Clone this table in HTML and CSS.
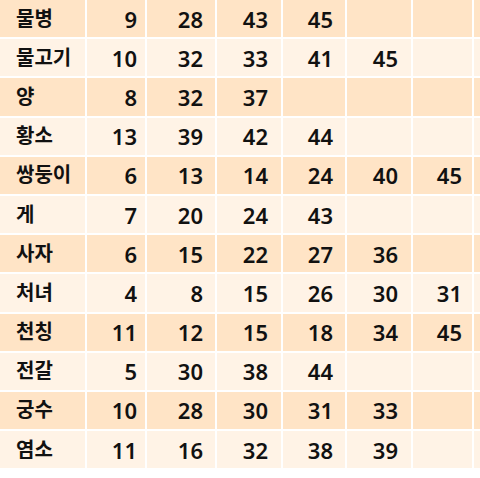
FILE: index.html
```html
<!DOCTYPE html>
<html lang="ko">
<head>
<meta charset="utf-8">
<title>별자리 번호</title>
<link rel="stylesheet" href="styles.css">
</head>
<body>
<table class="zodiac">
  <colgroup>
    <col class="c-name"><col class="c1"><col class="c2"><col class="c3"><col class="c4"><col class="c5"><col class="c6"><col class="c7">
  </colgroup>
  <tbody>
    <tr><td class="name">물병</td><td class="num">9</td><td class="num">28</td><td class="num">43</td><td class="num">45</td><td class="num"></td><td class="num"></td><td class="num"></td></tr>
    <tr><td class="name">물고기</td><td class="num">10</td><td class="num">32</td><td class="num">33</td><td class="num">41</td><td class="num">45</td><td class="num"></td><td class="num"></td></tr>
    <tr><td class="name">양</td><td class="num">8</td><td class="num">32</td><td class="num">37</td><td class="num"></td><td class="num"></td><td class="num"></td><td class="num"></td></tr>
    <tr><td class="name">황소</td><td class="num">13</td><td class="num">39</td><td class="num">42</td><td class="num">44</td><td class="num"></td><td class="num"></td><td class="num"></td></tr>
    <tr><td class="name">쌍둥이</td><td class="num">6</td><td class="num">13</td><td class="num">14</td><td class="num">24</td><td class="num">40</td><td class="num">45</td><td class="num"></td></tr>
    <tr><td class="name">게</td><td class="num">7</td><td class="num">20</td><td class="num">24</td><td class="num">43</td><td class="num"></td><td class="num"></td><td class="num"></td></tr>
    <tr><td class="name">사자</td><td class="num">6</td><td class="num">15</td><td class="num">22</td><td class="num">27</td><td class="num">36</td><td class="num"></td><td class="num"></td></tr>
    <tr><td class="name">처녀</td><td class="num">4</td><td class="num">8</td><td class="num">15</td><td class="num">26</td><td class="num">30</td><td class="num">31</td><td class="num"></td></tr>
    <tr><td class="name">천칭</td><td class="num">11</td><td class="num">12</td><td class="num">15</td><td class="num">18</td><td class="num">34</td><td class="num">45</td><td class="num"></td></tr>
    <tr><td class="name">전갈</td><td class="num">5</td><td class="num">30</td><td class="num">38</td><td class="num">44</td><td class="num"></td><td class="num"></td><td class="num"></td></tr>
    <tr><td class="name">궁수</td><td class="num">10</td><td class="num">28</td><td class="num">30</td><td class="num">31</td><td class="num">33</td><td class="num"></td><td class="num"></td></tr>
    <tr><td class="name">염소</td><td class="num">11</td><td class="num">16</td><td class="num">32</td><td class="num">38</td><td class="num">39</td><td class="num"></td><td class="num"></td></tr>
  </tbody>
</table>
</body>
</html>
```

FILE: styles.css
```css
html, body {
  margin: 0;
  padding: 0;
  background: #ffffff;
  overflow: hidden;
}

body {
  width: 480px;
  height: 478px;
}

.zodiac {
  border-collapse: separate;
  border-spacing: 2px;
  table-layout: fixed;
  width: 496px;
  margin: -2px 0 0 -2px;
  font-family: "Noto Sans", "Noto Sans CJK KR", sans-serif;
  color: #111111;
}

.c-name { width: 85px; }
.c1 { width: 58px; }
.c2 { width: 68px; }
.c3 { width: 64px; }
.c4 { width: 62px; }
.c5 { width: 64px; }
.c6 { width: 59px; }
.c7 { width: 20px; }

.zodiac td {
  height: 37.2px;
  padding: 0;
  vertical-align: middle;
  white-space: nowrap;
  line-height: 1;
}

.zodiac tr:nth-child(odd) td {
  background: #ffe4c6;
}

.zodiac tr:nth-child(even) td {
  background: #fff3e6;
}

.name {
  text-align: left;
  padding-left: 16px !important;
  font-size: 20px;
  font-weight: 700;
}

.num {
  text-align: right;
  font-size: 22px;
  font-weight: 600;
}

.zodiac td:nth-child(2) { padding-right: 8px; }
.zodiac td:nth-child(3) { padding-right: 12px; }
.zodiac td:nth-child(4) { padding-right: 13px; }
.zodiac td:nth-child(5) { padding-right: 12px; }
.zodiac td:nth-child(6) { padding-right: 13px; }
.zodiac td:nth-child(7) { padding-right: 10px; }
```
